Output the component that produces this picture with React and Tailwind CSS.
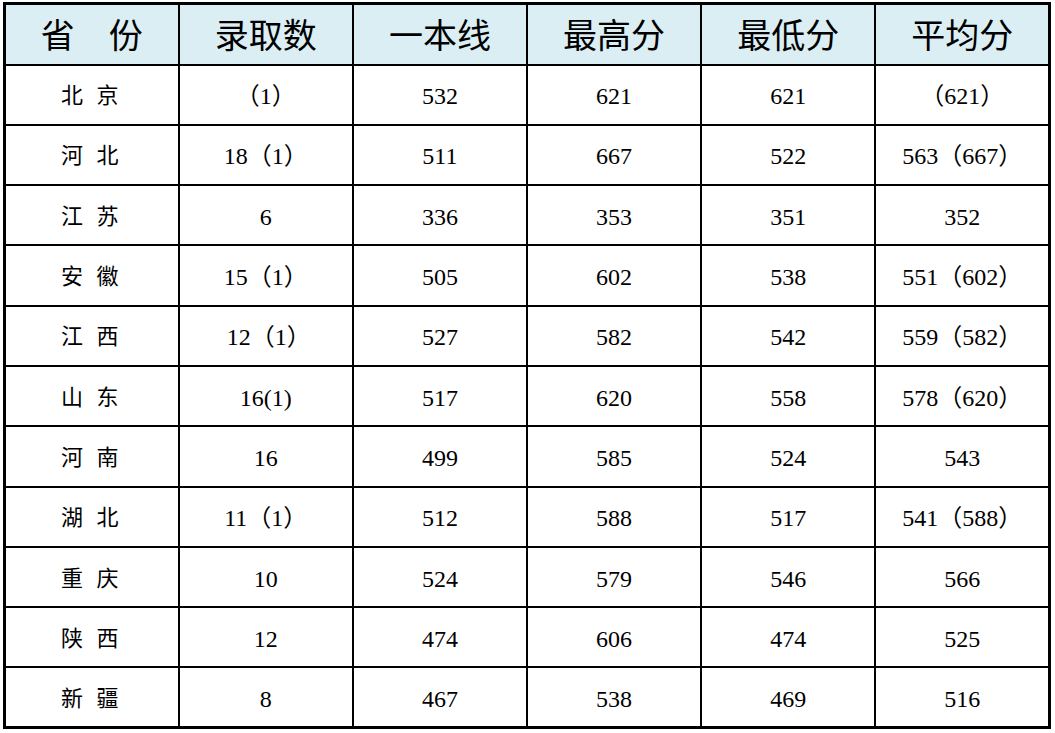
const headers = ["省　份", "录取数", "一本线", "最高分", "最低分", "平均分"]

const rows = [
  ["北 京", "（1）", "532", "621", "621", "（621）"],
  ["河 北", "18（1）", "511", "667", "522", "563（667）"],
  ["江 苏", "6", "336", "353", "351", "352"],
  ["安 徽", "15（1）", "505", "602", "538", "551（602）"],
  ["江 西", "\u00a012（1）", "527", "582", "542", "559（582）"],
  ["山 东", "16(1)", "517", "620", "558", "578（620）"],
  ["河 南", "16", "499", "585", "524", "543"],
  ["湖 北", "11（1）", "512", "588", "517", "541（588）"],
  ["重 庆", "10", "524", "579", "546", "566"],
  ["陕 西", "12", "474", "606", "474", "525"],
  ["新 疆", "8", "467", "538", "469", "516"],
]

export default function App() {
  return (
    <div className="bg-white w-[1055px] h-[733px] pl-[3px] pt-[2px] font-[family-name:Noto_Sans_CJK_SC,sans-serif]">
      <table className="border-collapse w-[1048px] table-fixed border-[3px] border-black">
        <thead>
          <tr className="h-[61px] bg-[#daeef3]">
            {headers.map((h, i) => (
              <th
                key={i}
                className="border-[2.5px] border-black text-center font-normal text-[34px] text-black leading-none"
              >
                {h}
              </th>
            ))}
          </tr>
        </thead>
        <tbody className="font-[family-name:Liberation_Serif,Noto_Sans_CJK_SC,serif]">
          {rows.map((row, r) => (
            <tr key={r} className="h-[60.3px]">
              {row.map((cell, c) => (
                <td
                  key={c}
                  className={
                    c === 0
                      ? "border-[2.5px] border-black text-center text-black leading-none text-[22px] tracking-[4px] pt-[3px]"
                      : "border-[2.5px] border-black text-center text-black leading-none text-[24px] pt-[3px]"
                  }
                >
                  {cell}
                </td>
              ))}
            </tr>
          ))}
        </tbody>
      </table>
    </div>
  )
}
